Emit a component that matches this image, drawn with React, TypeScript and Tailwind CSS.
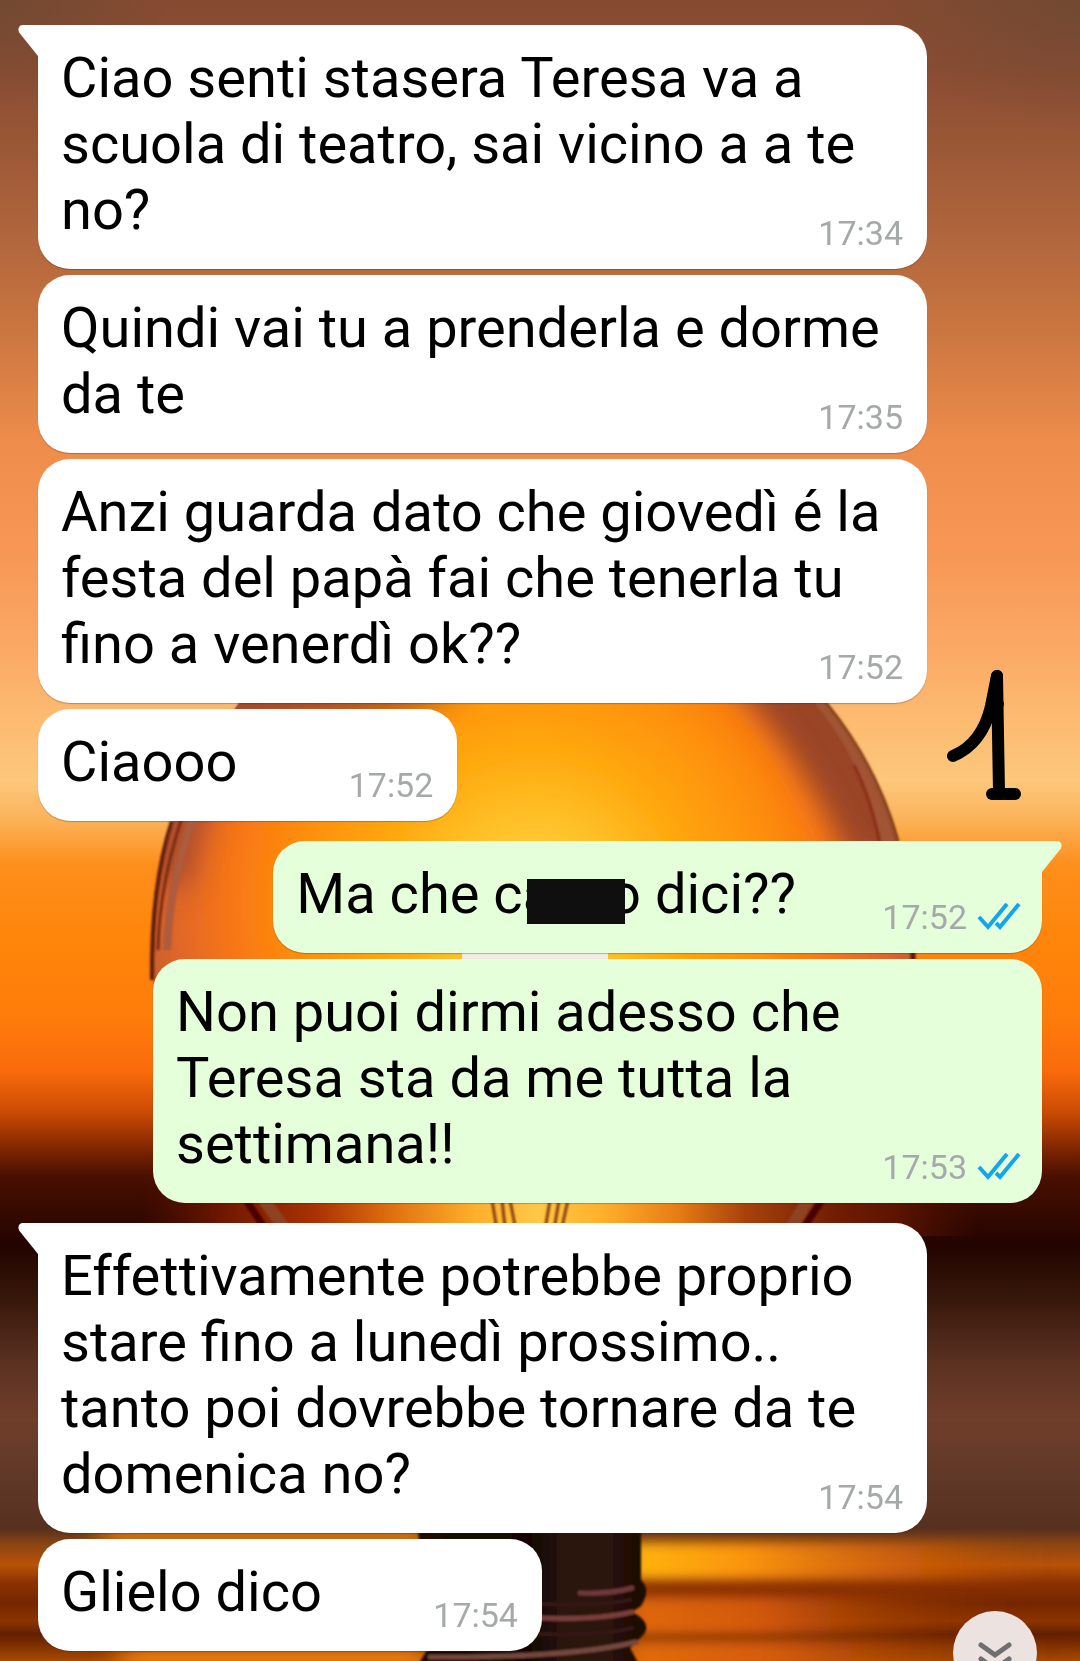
import React from "react";

type Message = {
  lines: React.ReactNode[];
  time: string;
  sent?: boolean;
  first?: boolean;
};

function Redacted() {
  return (
    <span className="relative inline-block w-[56px]" aria-label="censurato">
      <span className="absolute -right-4 -bottom-[11px] h-[45px] w-[98px] bg-[#0f0f0f]" />
    </span>
  );
}

const messages: Message[] = [
  {
    first: true,
    time: "17:34",
    lines: ["Ciao senti stasera Teresa va a", "scuola di teatro, sai vicino a a te", "no?"],
  },
  { time: "17:35", lines: ["Quindi vai tu a prenderla e dorme", "da te"] },
  {
    time: "17:52",
    lines: ["Anzi guarda dato che giovedì é la", "festa del papà fai che tenerla tu", "fino a venerdì ok??"],
  },
  { time: "17:52", lines: ["Ciaooo"] },
  {
    first: true,
    sent: true,
    time: "17:52",
    lines: [
      <>
        Ma che ca
        <Redacted />o dici??
      </>,
    ],
  },
  {
    sent: true,
    time: "17:53",
    lines: ["Non puoi dirmi adesso che", "Teresa sta da me tutta la", "settimana!!"],
  },
  {
    first: true,
    time: "17:54",
    lines: [
      "Effettivamente potrebbe proprio",
      "stare fino a lunedì prossimo..",
      "tanto poi dovrebbe tornare da te",
      "domenica no?",
    ],
  },
  { time: "17:54", lines: ["Glielo dico"] },
];

function Wallpaper() {
  return (
    <svg
      className="absolute inset-0 h-full w-full"
      viewBox="0 0 1080 1661"
      preserveAspectRatio="xMidYMid slice"
      aria-hidden="true"
    >
      <defs>
        <filter id="soft" x="-10%" y="-10%" width="120%" height="120%">
          <feGaussianBlur stdDeviation="1.2" />
        </filter>
        <filter id="haze" x="-30%" y="-30%" width="160%" height="160%">
          <feGaussianBlur stdDeviation="14" />
        </filter>
        <filter id="ripple" x="-20%" y="-60%" width="140%" height="220%">
          <feGaussianBlur stdDeviation="14 6" />
        </filter>
        <linearGradient id="sky" gradientUnits="userSpaceOnUse" x1="0" y1="0" x2="0" y2="1661">
          <stop offset="0" stopColor="#854b31" />
          <stop offset="0.04" stopColor="#8b4c33" />
          <stop offset="0.09" stopColor="#9b5836" />
          <stop offset="0.15" stopColor="#b4683d" />
          <stop offset="0.2" stopColor="#cb7640" />
          <stop offset="0.265" stopColor="#ee8c4b" />
          <stop offset="0.33" stopColor="#f79655" />
          <stop offset="0.39" stopColor="#fba865" />
          <stop offset="0.43" stopColor="#fcba70" />
          <stop offset="0.47" stopColor="#fdc77c" />
          <stop offset="0.492" stopColor="#fcb45c" />
          <stop offset="0.52" stopColor="#fe8f1c" />
          <stop offset="0.56" stopColor="#ff860b" />
          <stop offset="0.61" stopColor="#fe7d0a" />
          <stop offset="0.645" stopColor="#fa6a0c" />
          <stop offset="0.67" stopColor="#c94b04" />
          <stop offset="0.69" stopColor="#852800" />
          <stop offset="0.708" stopColor="#4a0f00" />
          <stop offset="0.75" stopColor="#230400" />
          <stop offset="0.78" stopColor="#351609" />
          <stop offset="0.82" stopColor="#5b3121" />
          <stop offset="0.855" stopColor="#703e2a" />
          <stop offset="0.89" stopColor="#5f3828" />
          <stop offset="0.92" stopColor="#57301f" />
          <stop offset="0.93" stopColor="#8c4512" />
          <stop offset="0.942" stopColor="#b85207" />
          <stop offset="0.953" stopColor="#8c3200" />
          <stop offset="0.965" stopColor="#762600" />
          <stop offset="0.976" stopColor="#8c3400" />
          <stop offset="0.984" stopColor="#611f00" />
          <stop offset="1" stopColor="#a84a00" />
        </linearGradient>
        <radialGradient id="corner">
          <stop offset="0" stopColor="#6a4832" stopOpacity="0.7" />
          <stop offset="1" stopColor="#6a4832" stopOpacity="0" />
        </radialGradient>
        <radialGradient id="glass" gradientUnits="userSpaceOnUse" cx="533" cy="905" r="390">
          <stop offset="0" stopColor="#ffd84a" />
          <stop offset="0.25" stopColor="#ffbd24" />
          <stop offset="0.42" stopColor="#ffa50a" />
          <stop offset="0.6" stopColor="#fe900c" />
          <stop offset="0.76" stopColor="#f97814" />
          <stop offset="0.92" stopColor="#e0662a" />
          <stop offset="1" stopColor="#c4602e" />
        </radialGradient>
        <linearGradient id="floor" gradientUnits="userSpaceOnUse" x1="140" y1="0" x2="980" y2="0">
          <stop offset="0" stopColor="#5c1200" stopOpacity="0" />
          <stop offset="0.1" stopColor="#701800" />
          <stop offset="0.21" stopColor="#aa3204" />
          <stop offset="0.3" stopColor="#e0700f" />
          <stop offset="0.4" stopColor="#ffb02c" />
          <stop offset="0.475" stopColor="#ffc848" />
          <stop offset="0.55" stopColor="#ffb02c" />
          <stop offset="0.64" stopColor="#e87c14" />
          <stop offset="0.72" stopColor="#a8420c" />
          <stop offset="0.83" stopColor="#701c02" />
          <stop offset="0.9" stopColor="#5c1400" />
          <stop offset="1" stopColor="#4a1000" stopOpacity="0" />
        </linearGradient>
        <linearGradient id="waterLow" x1="0" y1="0" x2="1" y2="0">
          <stop offset="0" stopColor="#f07410" />
          <stop offset="0.35" stopColor="#e0600c" />
          <stop offset="0.65" stopColor="#b04806" stopOpacity="0.6" />
          <stop offset="1" stopColor="#8a3000" stopOpacity="0" />
        </linearGradient>
        <linearGradient id="waterHigh" x1="0" y1="0" x2="1" y2="0">
          <stop offset="0" stopColor="#ffb810" />
          <stop offset="0.3" stopColor="#fb9410" />
          <stop offset="0.7" stopColor="#d2600a" stopOpacity="0.7" />
          <stop offset="1" stopColor="#b85207" stopOpacity="0" />
        </linearGradient>
        <linearGradient id="neck" x1="0" y1="0" x2="1" y2="0">
          <stop offset="0" stopColor="#1c0b06" />
          <stop offset="0.5" stopColor="#120605" />
          <stop offset="0.65" stopColor="#2c150a" />
          <stop offset="0.85" stopColor="#2a1208" />
          <stop offset="1" stopColor="#180604" />
        </linearGradient>
        <clipPath id="bulb">
          <ellipse cx="533" cy="950" rx="381" ry="388" />
        </clipPath>
      </defs>
      <rect width="1080" height="1661" fill="url(#sky)" />
      <ellipse cx="0" cy="0" rx="170" ry="110" fill="url(#corner)" />
      <ellipse cx="1080" cy="0" rx="220" ry="130" fill="url(#corner)" />

      <g filter="url(#soft)">
        <ellipse cx="533" cy="950" rx="381" ry="388" fill="url(#glass)" />
      </g>
      <g clipPath="url(#bulb)">
        <g filter="url(#haze)">
          <path d="M200 690 Q300 640 460 690 Q420 718 220 720Z" fill="#8a3c2c" opacity="0.8" />
          <path d="M690 640 Q790 730 850 860 L940 860 L840 640Z" fill="#9a4428" />
          <path d="M150 880 Q160 780 240 720 Q210 800 190 890Z" fill="#a2482e" opacity="0.8" />
        </g>
        <g fill="none" filter="url(#soft)">
          <path d="M812 690 Q868 752 891 850" stroke="#a4583a" strokeWidth="13" opacity="0.8" />
          <path d="M854 765 Q872 800 881 850" stroke="#8c2f18" strokeWidth="3" />
          <path d="M201 800 Q170 870 167 950" stroke="#ad5c3c" strokeWidth="8" />
          <path d="M188 800 Q159 880 158 950" stroke="#7c2c14" strokeWidth="3" />
        </g>
      </g>
      <g fill="none" filter="url(#soft)">
        <path d="M826 703 Q877 765 898 841" stroke="#8a4a20" strokeWidth="3" />
        <path d="M172 821 Q151 885 152 980" stroke="#5c1a08" strokeWidth="4" />
        <path d="M913 930 V970" stroke="#5c1408" strokeWidth="5" />
      </g>
      <rect x="462" y="948" width="146" height="16" rx="6" fill="#f2ece4" />

      <rect x="140" y="1180" width="840" height="56" fill="url(#floor)" />
      <g fill="none" stroke="#8a3c08" strokeWidth="3" filter="url(#soft)">
        <path d="M492 1200 L498 1236 M502 1200 L506 1236 M510 1200 L517 1236 M550 1200 L544 1236 M559 1200 L553 1236 M568 1200 L560 1236" />
        <path d="M246 1200 L270 1236 M822 1200 L798 1236" stroke="#4a0600" strokeWidth="7" />
        <path d="M264 1200 L290 1236 M808 1200 L786 1236" stroke="#8f4220" strokeWidth="12" />
      </g>

      <rect x="620" y="1543" width="420" height="36" fill="url(#waterHigh)" filter="url(#ripple)" />
      <rect x="620" y="1596" width="400" height="40" fill="url(#waterLow)" filter="url(#ripple)" opacity="0.85" />
      <rect x="620" y="1640" width="440" height="30" fill="url(#waterLow)" filter="url(#ripple)" opacity="0.85" />
      <rect x="100" y="1528" width="330" height="16" fill="#d8760f" filter="url(#ripple)" />
      <rect x="120" y="1650" width="310" height="16" fill="#ee7f0c" filter="url(#ripple)" />
      <g filter="url(#soft)">
        <path
          d="M417 1520 H641 V1580 Q651 1590 641 1606 L632 1612 Q652 1622 644 1634 L630 1648 L642 1670 H415 L430 1645Z"
          fill="url(#neck)"
        />
        <g fill="none" strokeLinecap="round">
          <path d="M580 1593 Q610 1594 632 1588" stroke="#70383a" strokeWidth="5" />
          <path d="M540 1618 Q600 1620 632 1612" stroke="#7a3c3a" strokeWidth="5" />
          <path d="M430 1657 Q570 1658 636 1642" stroke="#74463e" strokeWidth="5" />
          <path d="M540 1604 Q600 1606 630 1600" stroke="#351518" strokeWidth="4" />
          <path d="M540 1634 Q600 1636 632 1628" stroke="#351518" strokeWidth="4" />
        </g>
      </g>
    </svg>
  );
}

function Tail({ sent }: { sent?: boolean }) {
  return (
    <svg
      className={
        sent
          ? "absolute top-0 left-full -ml-px h-8 w-[21px] -scale-x-100 text-[#e5ffdb]"
          : "absolute top-0 right-full -mr-px h-8 w-[21px] text-white"
      }
      viewBox="0 0 21 32"
      aria-hidden="true"
    >
      <path d="M21 0 H5 C1 0 -1 4 1.500 8 L20 31 H21Z" fill="currentColor" />
    </svg>
  );
}

function ReadTicks() {
  return (
    <svg className="h-7 w-11" viewBox="0 0 44 28" fill="none" stroke="#14a5ec" strokeWidth="4" role="img" aria-label="Letto">
      <path d="M2 14 L11 24 L30 1" />
      <path d="M19 20 L23 24 L42 1" />
    </svg>
  );
}

function Bubble({ message }: { message: Message }) {
  const { sent, first, lines, time } = message;
  const single = lines.length === 1;
  return (
    <li className={`flex ${sent ? "justify-end" : "justify-start"} ${first ? "mt-[14px] first:mt-0" : ""}`}>
      <article
        className={`relative grid max-w-[889px] rounded-[32px] pt-5 pb-4 pl-[23px] shadow-[0_1px_1px_rgba(60,30,0,0.3)] ${
          single ? "" : "w-full"
        } ${sent ? "bg-[#e5ffdb] pr-[21px]" : "bg-white pr-6"} ${
          first ? (sent ? "rounded-tr-none" : "rounded-tl-none") : ""
        }`}
      >
        {first && <Tail sent={sent} />}
        <p
          className={`col-start-1 row-start-1 pb-[10px] text-[56px] leading-[66px] text-black ${
            single ? (sent ? "pr-[225px]" : "pr-[196px]") : ""
          }`}
        >
          {lines.map((line, i) => (
            <span key={i} className="block whitespace-nowrap">
              {line}
            </span>
          ))}
        </p>
        <footer className="col-start-1 row-start-1 flex items-center gap-[10px] self-end justify-self-end">
          <time className="text-[34px] leading-10 text-[#a6a9aa]">{time}</time>
          {sent && <ReadTicks />}
        </footer>
      </article>
    </li>
  );
}

export default function App() {
  return (
    <main className="relative min-h-screen overflow-hidden bg-[#8b4c33] font-['Roboto',sans-serif]">
      <Wallpaper />
      <ol className="relative flex flex-col gap-[6px] px-[38px] pt-[25px] pb-[10px]">
        {messages.map((m, i) => (
          <Bubble key={i} message={m} />
        ))}
      </ol>
      <svg
        className="absolute top-[668px] right-[53px] h-[134px] w-[80px]"
        viewBox="0 0 80 134"
        fill="none"
        stroke="#000"
        strokeWidth="12"
        strokeLinecap="round"
        strokeLinejoin="round"
        role="img"
        aria-label="1"
      >
        <path d="M6 88 C25 80 38 64 44 38 L50 8 L52 124" />
        <path d="M50 8 L47 40 L51 36" />
        <path d="M45 126 H68" />
      </svg>
      <button
        type="button"
        aria-label="Vai in fondo"
        className="absolute right-[43px] bottom-[-34px] flex size-[84px] justify-center rounded-full bg-[#ece2df] pt-[29px]"
      >
        <svg className="h-[34px] w-9" viewBox="0 0 36 34" fill="none" stroke="#6f6f6f" strokeWidth="5" strokeLinecap="round">
          <path d="M4 5 L18 15 L32 5" />
          <path d="M4 19 L18 29 L32 19" />
        </svg>
      </button>
    </main>
  );
}
